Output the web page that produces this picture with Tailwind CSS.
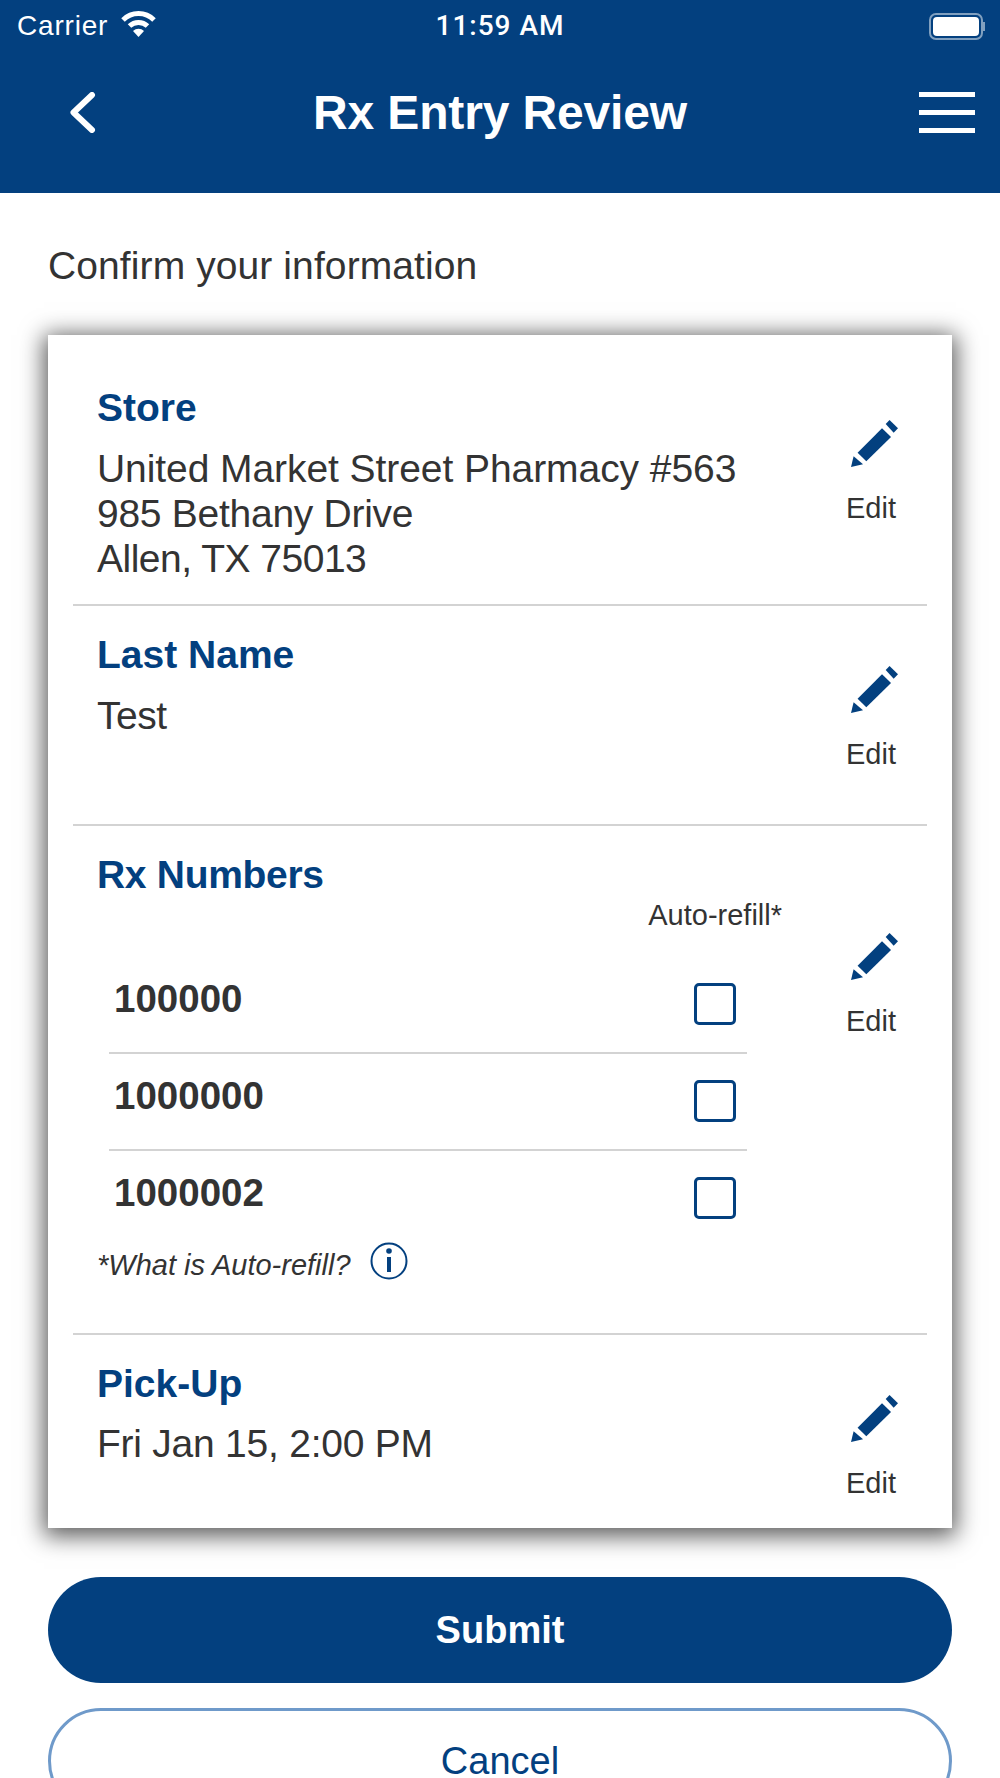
<!DOCTYPE html>
<html><head><meta charset="utf-8"><script src="https://cdn.jsdelivr.net/npm/@tailwindcss/browser@4"></script></head>
<body class="bg-white font-['Liberation_Sans',sans-serif] text-[#333333] overflow-hidden">
<div class="w-[1000px] h-[1778px] overflow-hidden">
<header class="h-[193px] bg-[#03407f] text-white flex flex-col">
  <div class="h-[52px] relative flex items-center justify-between pl-[17px] pr-[15px]">
    <div class="flex items-center gap-[13px] text-[28px] leading-none tracking-[0.8px]"><span>Carrier</span>
      <svg width="35" height="27" viewBox="0 0 35 27" fill="none" stroke="white" stroke-width="5" class="-mt-[6px]"><path d="M2 10 A22 22 0 0 1 33 10"/><path d="M8.500 16 A13 13 0 0 1 26.500 16"/><path d="M17.500 27 L12 21 A8 8 0 0 1 23 21 Z" fill="white" stroke="none"/></svg>
    </div>
    <div class="absolute left-0 right-0 text-center text-[28px] leading-none font-medium font-['Roboto',sans-serif] tracking-[1px]">11:59 AM</div>
    <div class="flex items-center"><div class="w-[54px] h-[27px] rounded-[7px] border-2 border-white/50 p-[2px]"><div class="w-full h-full bg-white rounded-[4px]"></div></div><div class="w-[2px] h-[9px] bg-white/50"></div></div>
  </div>
  <div class="h-[121px] flex items-center justify-between pl-[70px] pr-[25px] relative">
    <svg width="26" height="41" viewBox="0 0 26 41" fill="none" stroke="white" stroke-width="6" stroke-linecap="round" stroke-linejoin="round"><path d="M22 3 L3.500 20.500 L22 38"/></svg>
    <div class="absolute left-0 right-0 text-center text-[48px] leading-none font-bold tracking-[-0.15px]">Rx Entry Review</div>
    <div class="flex flex-col gap-[13px]"><div class="w-[56px] h-[5px] bg-white"></div><div class="w-[56px] h-[5px] bg-white"></div><div class="w-[56px] h-[5px] bg-white"></div></div>
  </div>
</header>
<main class="px-[48px]">
  <h1 class="text-[39px] leading-[44px] font-normal tracking-[0.1px] mt-[51px] mb-[47px]">Confirm your information</h1>
  <section class="h-[1193px] bg-white shadow-[0_4px_22px_4px_rgba(0,0,0,0.65)] px-[25px] flex flex-col">
    <div class="h-[271px] shrink-0 border-b-2 border-[#d3d3d3] flex justify-between pl-[24px] pt-[53px]">
      <div>
        <h2 class="text-[39px] leading-[40px] font-bold text-[#03407f]">Store</h2>
        <p class="text-[39px] leading-[45px] mt-[18px]"><span class="tracking-[-0.07px]">United Market Street Pharmacy #563</span><br><span class="tracking-[-0.27px]">985 Bethany Drive</span><br><span class="tracking-[-0.5px]">Allen, TX 75013</span></p>
      </div>
      <div class="w-[100px] mr-[6px] mt-[32px] flex flex-col items-center text-[29px] leading-[34px]">
        <svg width="47" height="47" viewBox="0 0 50 50" fill="#03407f" class="translate-x-[3px]"><path d="M0 50 L2.800 38.600 L12.800 47 Z"/><path d="M7 34.800 L33 8.800 L42.600 18 L16.300 44 Z"/><path d="M36.900 4.300 L41 0 L50 8.900 L45.400 13.500 Z"/></svg>
        <span class="mt-[24px]">Edit</span>
      </div>
    </div>
    <div class="h-[220px] shrink-0 border-b-2 border-[#d3d3d3] flex justify-between pl-[24px] pt-[29px]">
      <div>
        <h2 class="text-[39px] leading-[40px] font-bold text-[#03407f]">Last Name</h2>
        <p class="text-[39px] leading-[45px] mt-[18px] tracking-[-0.5px]">Test</p>
      </div>
      <div class="w-[100px] mr-[6px] mt-[31px] flex flex-col items-center text-[29px] leading-[34px]">
        <svg width="47" height="47" viewBox="0 0 50 50" fill="#03407f" class="translate-x-[3px]"><path d="M0 50 L2.800 38.600 L12.800 47 Z"/><path d="M7 34.800 L33 8.800 L42.600 18 L16.300 44 Z"/><path d="M36.900 4.300 L41 0 L50 8.900 L45.400 13.500 Z"/></svg>
        <span class="mt-[24px]">Edit</span>
      </div>
    </div>
    <div class="h-[509px] shrink-0 border-b-2 border-[#d3d3d3] flex justify-between pl-[24px] pt-[29px]">
      <div class="w-[650px]">
        <h2 class="text-[39px] leading-[40px] font-bold text-[#03407f] tracking-[-0.3px]">Rx Numbers</h2>
        <div class="text-[29px] leading-[34px] text-right mt-[3px] w-[687px] pr-[2px]">Auto-refill*</div>
        <div class="ml-[12px] w-[638px] mt-[25px]">
          <div class="h-[97px] border-b-2 border-[#d3d3d3] flex items-center justify-between pl-[5px] pr-[11px] font-bold text-[38.5px]"><span class="pb-[12px]">100000</span><span class="w-[42px] h-[42px] rounded-[5px] border-[3px] border-[#03407f] mb-[2px]"></span></div>
          <div class="h-[97px] border-b-2 border-[#d3d3d3] flex items-center justify-between pl-[5px] pr-[11px] font-bold text-[38.5px]"><span class="pb-[12px]">1000000</span><span class="w-[42px] h-[42px] rounded-[5px] border-[3px] border-[#03407f] mb-[2px]"></span></div>
          <div class="h-[95px] flex items-center justify-between pl-[5px] pr-[11px] font-bold text-[38.5px]"><span class="pb-[12px]">1000002</span><span class="w-[42px] h-[42px] rounded-[5px] border-[3px] border-[#03407f] mb-[2px]"></span></div>
        </div>
        <div class="flex items-center gap-[19px]">
          <span class="italic text-[29px] leading-[36px]">*What is Auto-refill?</span>
          <svg width="38" height="38" viewBox="0 0 38 38" fill="none" class="-translate-y-[4px]"><circle cx="19" cy="19" r="17.500" stroke="#03407f" stroke-width="2"/><circle cx="19" cy="9" r="2.800" fill="#03407f"/><rect x="17" y="15" width="4" height="15" fill="#03407f"/></svg>
        </div>
      </div>
      <div class="w-[100px] mr-[6px] mt-[78px] flex flex-col items-center text-[29px] leading-[34px]">
        <svg width="47" height="47" viewBox="0 0 50 50" fill="#03407f" class="translate-x-[3px]"><path d="M0 50 L2.800 38.600 L12.800 47 Z"/><path d="M7 34.800 L33 8.800 L42.600 18 L16.300 44 Z"/><path d="M36.900 4.300 L41 0 L50 8.900 L45.400 13.500 Z"/></svg>
        <span class="mt-[24px]">Edit</span>
      </div>
    </div>
    <div class="flex-1 flex justify-between pl-[24px] pt-[29px]">
      <div>
        <h2 class="text-[39px] leading-[40px] font-bold text-[#03407f]">Pick-Up</h2>
        <p class="text-[39px] leading-[45px] mt-[17px] tracking-[-0.24px]">Fri Jan 15, 2:00 PM</p>
      </div>
      <div class="w-[100px] mr-[6px] mt-[31px] flex flex-col items-center text-[29px] leading-[34px]">
        <svg width="47" height="47" viewBox="0 0 50 50" fill="#03407f" class="translate-x-[3px]"><path d="M0 50 L2.800 38.600 L12.800 47 Z"/><path d="M7 34.800 L33 8.800 L42.600 18 L16.300 44 Z"/><path d="M36.900 4.300 L41 0 L50 8.900 L45.400 13.500 Z"/></svg>
        <span class="mt-[24px]">Edit</span>
      </div>
    </div>
  </section>
  <button class="block w-full h-[106px] mt-[49px] rounded-full bg-[#03407f] text-white text-[38px] font-bold">Submit</button>
  <button class="block w-full h-[106px] mt-[25px] rounded-full border-[3px] border-[#6f9aca] text-[#03407f] text-[38px]">Cancel</button>
</main>
</div>
</body></html>
